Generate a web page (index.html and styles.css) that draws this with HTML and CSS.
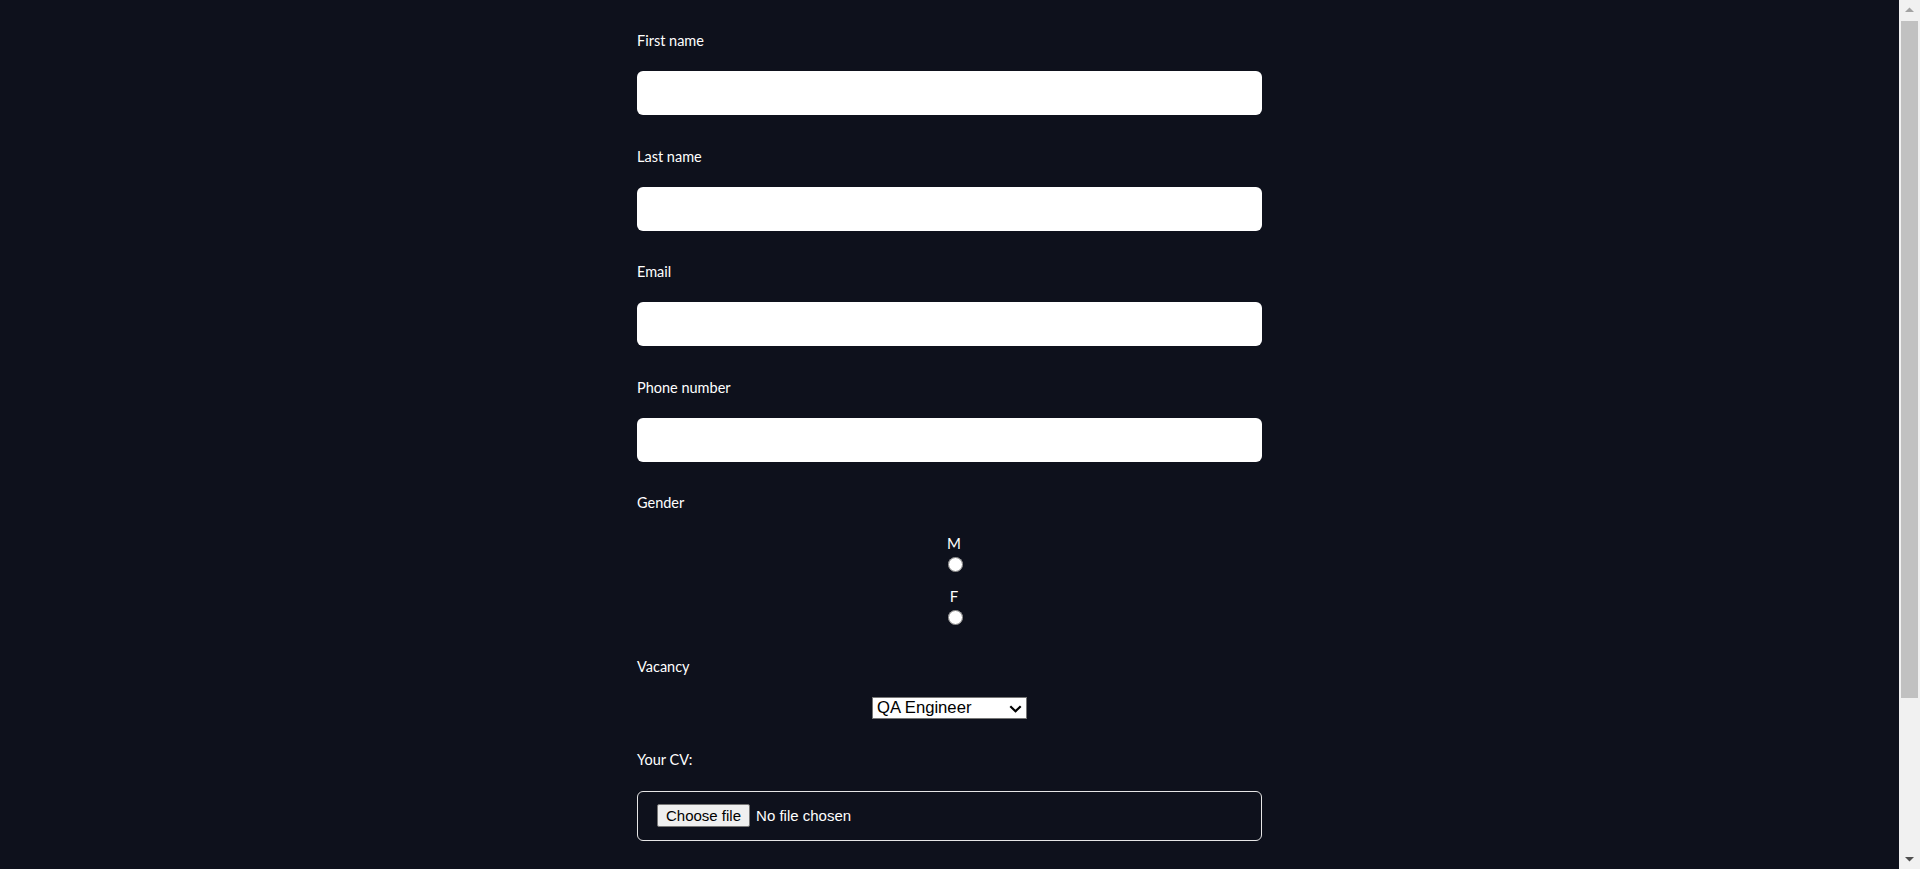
FILE: index.html
```html
<!DOCTYPE html>
<html lang="en">
<head>
<meta charset="utf-8">
<title>Application form</title>
<link rel="stylesheet" href="styles.css">
</head>
<body>
<form class="form">
  <div class="field">
    <label class="label" for="first-name">First name</label>
    <input class="text-input" id="first-name" type="text">
  </div>
  <div class="field">
    <label class="label" for="last-name">Last name</label>
    <input class="text-input" id="last-name" type="text">
  </div>
  <div class="field">
    <label class="label" for="email">Email</label>
    <input class="text-input" id="email" type="email">
  </div>
  <div class="field">
    <label class="label" for="phone">Phone number</label>
    <input class="text-input" id="phone" type="tel">
  </div>
  <div class="field">
    <span class="label">Gender</span>
    <div class="radio-group">
      <label class="radio-option"><span class="radio-text">M</span><input class="radio" type="radio" name="gender" value="M"></label>
      <label class="radio-option"><span class="radio-text">F</span><input class="radio" type="radio" name="gender" value="F"></label>
    </div>
  </div>
  <div class="field">
    <label class="label" for="vacancy">Vacancy</label>
    <div class="select-row">
      <div class="select-wrap">
        <select class="select" id="vacancy">
          <option>QA Engineer</option>
          <option>Developer</option>
          <option>Designer</option>
        </select>
        <svg class="select-arrow" width="13" height="8" viewBox="0 0 13 8" aria-hidden="true"><path d="M1.3 1.3 L6.5 6.3 L11.7 1.3" fill="none" stroke="#000" stroke-width="2.2"/></svg>
      </div>
    </div>
  </div>
  <div class="field field-last">
    <span class="label label-cv">Your CV:</span>
    <div class="file-box">
      <input class="file-input" id="cv" type="file">
      <label class="file-button" for="cv">Choose file</label>
      <span class="file-status">No file chosen</span>
    </div>
  </div>
</form>
<div class="scrollbar" aria-hidden="true">
  <div class="scroll-btn">
    <svg width="21" height="21" viewBox="0 0 21 21"><path d="M6 12 L10.5 7.5 L15 12 Z" fill="#a3a3a3"/></svg>
  </div>
  <div class="scroll-track">
    <div class="scroll-thumb"></div>
  </div>
  <div class="scroll-btn">
    <svg width="21" height="21" viewBox="0 0 21 21"><path d="M6 9 L10.5 13.5 L15 9 Z" fill="#505050"/></svg>
  </div>
</div>
</body>
</html>
```
FILE: styles.css
```css
html {
  background: #0e111c;
  scrollbar-width: none;
}

html::-webkit-scrollbar {
  display: none;
}

body {
  margin: 0;
  padding-right: 21px;
  background: #0e111c;
  color: #ffffff;
  font-family: Lato, "Open Sans", "Liberation Sans", sans-serif;
}

.form {
  width: 625px;
  margin: 0 auto;
  padding: 30px 0 40px;
}

.field {
  margin-bottom: 30.5px;
}

.field-last {
  margin-bottom: 0;
}

.label {
  display: block;
  font-size: 14.5px;
  line-height: 20px;
  padding-top: 1px;
  margin-bottom: 20px;
}

.label-cv {
  margin-top: 1px;
  margin-bottom: 20.5px;
}

.text-input {
  display: block;
  box-sizing: border-box;
  width: 100%;
  height: 44px;
  margin: 0;
  border: 0;
  border-radius: 6px;
  background: #ffffff;
}

.radio-group {
  display: flex;
  flex-direction: column;
  align-items: center;
  gap: 13.5px;
  padding-left: 9px;
  margin-top: -0.5px;
}

.radio-option {
  display: flex;
  flex-direction: column;
  align-items: center;
}

.radio-text {
  font-size: 15px;
  line-height: 20px;
}

.radio {
  width: 15px;
  height: 15px;
  margin: 4.5px 0 0 2px;
}

.select-row {
  display: flex;
  justify-content: center;
}

.select-wrap {
  position: relative;
  width: 155px;
  height: 22px;
}

.select {
  appearance: none;
  -webkit-appearance: none;
  box-sizing: border-box;
  width: 155px;
  height: 22px;
  margin: 0;
  font-family: "Liberation Sans", Arial, sans-serif;
  font-size: 16.67px;
  line-height: 20px;
  color: #000;
  background: #fff;
  border: 1px solid #767676;
  border-radius: 0;
  padding: 0 22px 0 4px;
}

.select-arrow {
  position: absolute;
  right: 5px;
  top: 8px;
  pointer-events: none;
}

.file-box {
  box-sizing: border-box;
  height: 50px;
  border: 1px solid #e6e6e6;
  border-radius: 6px;
  padding: 0 19px;
  display: flex;
  align-items: center;
  font-family: "Liberation Sans", Arial, sans-serif;
  font-size: 15px;
}

.file-input {
  position: absolute;
  width: 1px;
  height: 1px;
  opacity: 0;
  overflow: hidden;
}

.file-button {
  box-sizing: border-box;
  height: 23px;
  line-height: 21px;
  padding: 0 8px;
  background: #efefef;
  color: #000;
  border: 1px solid #767676;
  border-radius: 2px;
}

.file-status {
  margin-left: 6px;
  color: #ffffff;
}

.scrollbar {
  position: fixed;
  top: 0;
  right: 0;
  bottom: 0;
  width: 21px;
  background: #f1f1f1;
  display: flex;
  flex-direction: column;
}

.scroll-btn {
  height: 21px;
  flex: none;
}

.scroll-btn svg {
  display: block;
}

.scroll-track {
  flex: 1;
  display: flex;
  flex-direction: column;
}

.scroll-thumb {
  height: 677px;
  margin: 0 2px;
  background: #c1c1c1;
}
```
